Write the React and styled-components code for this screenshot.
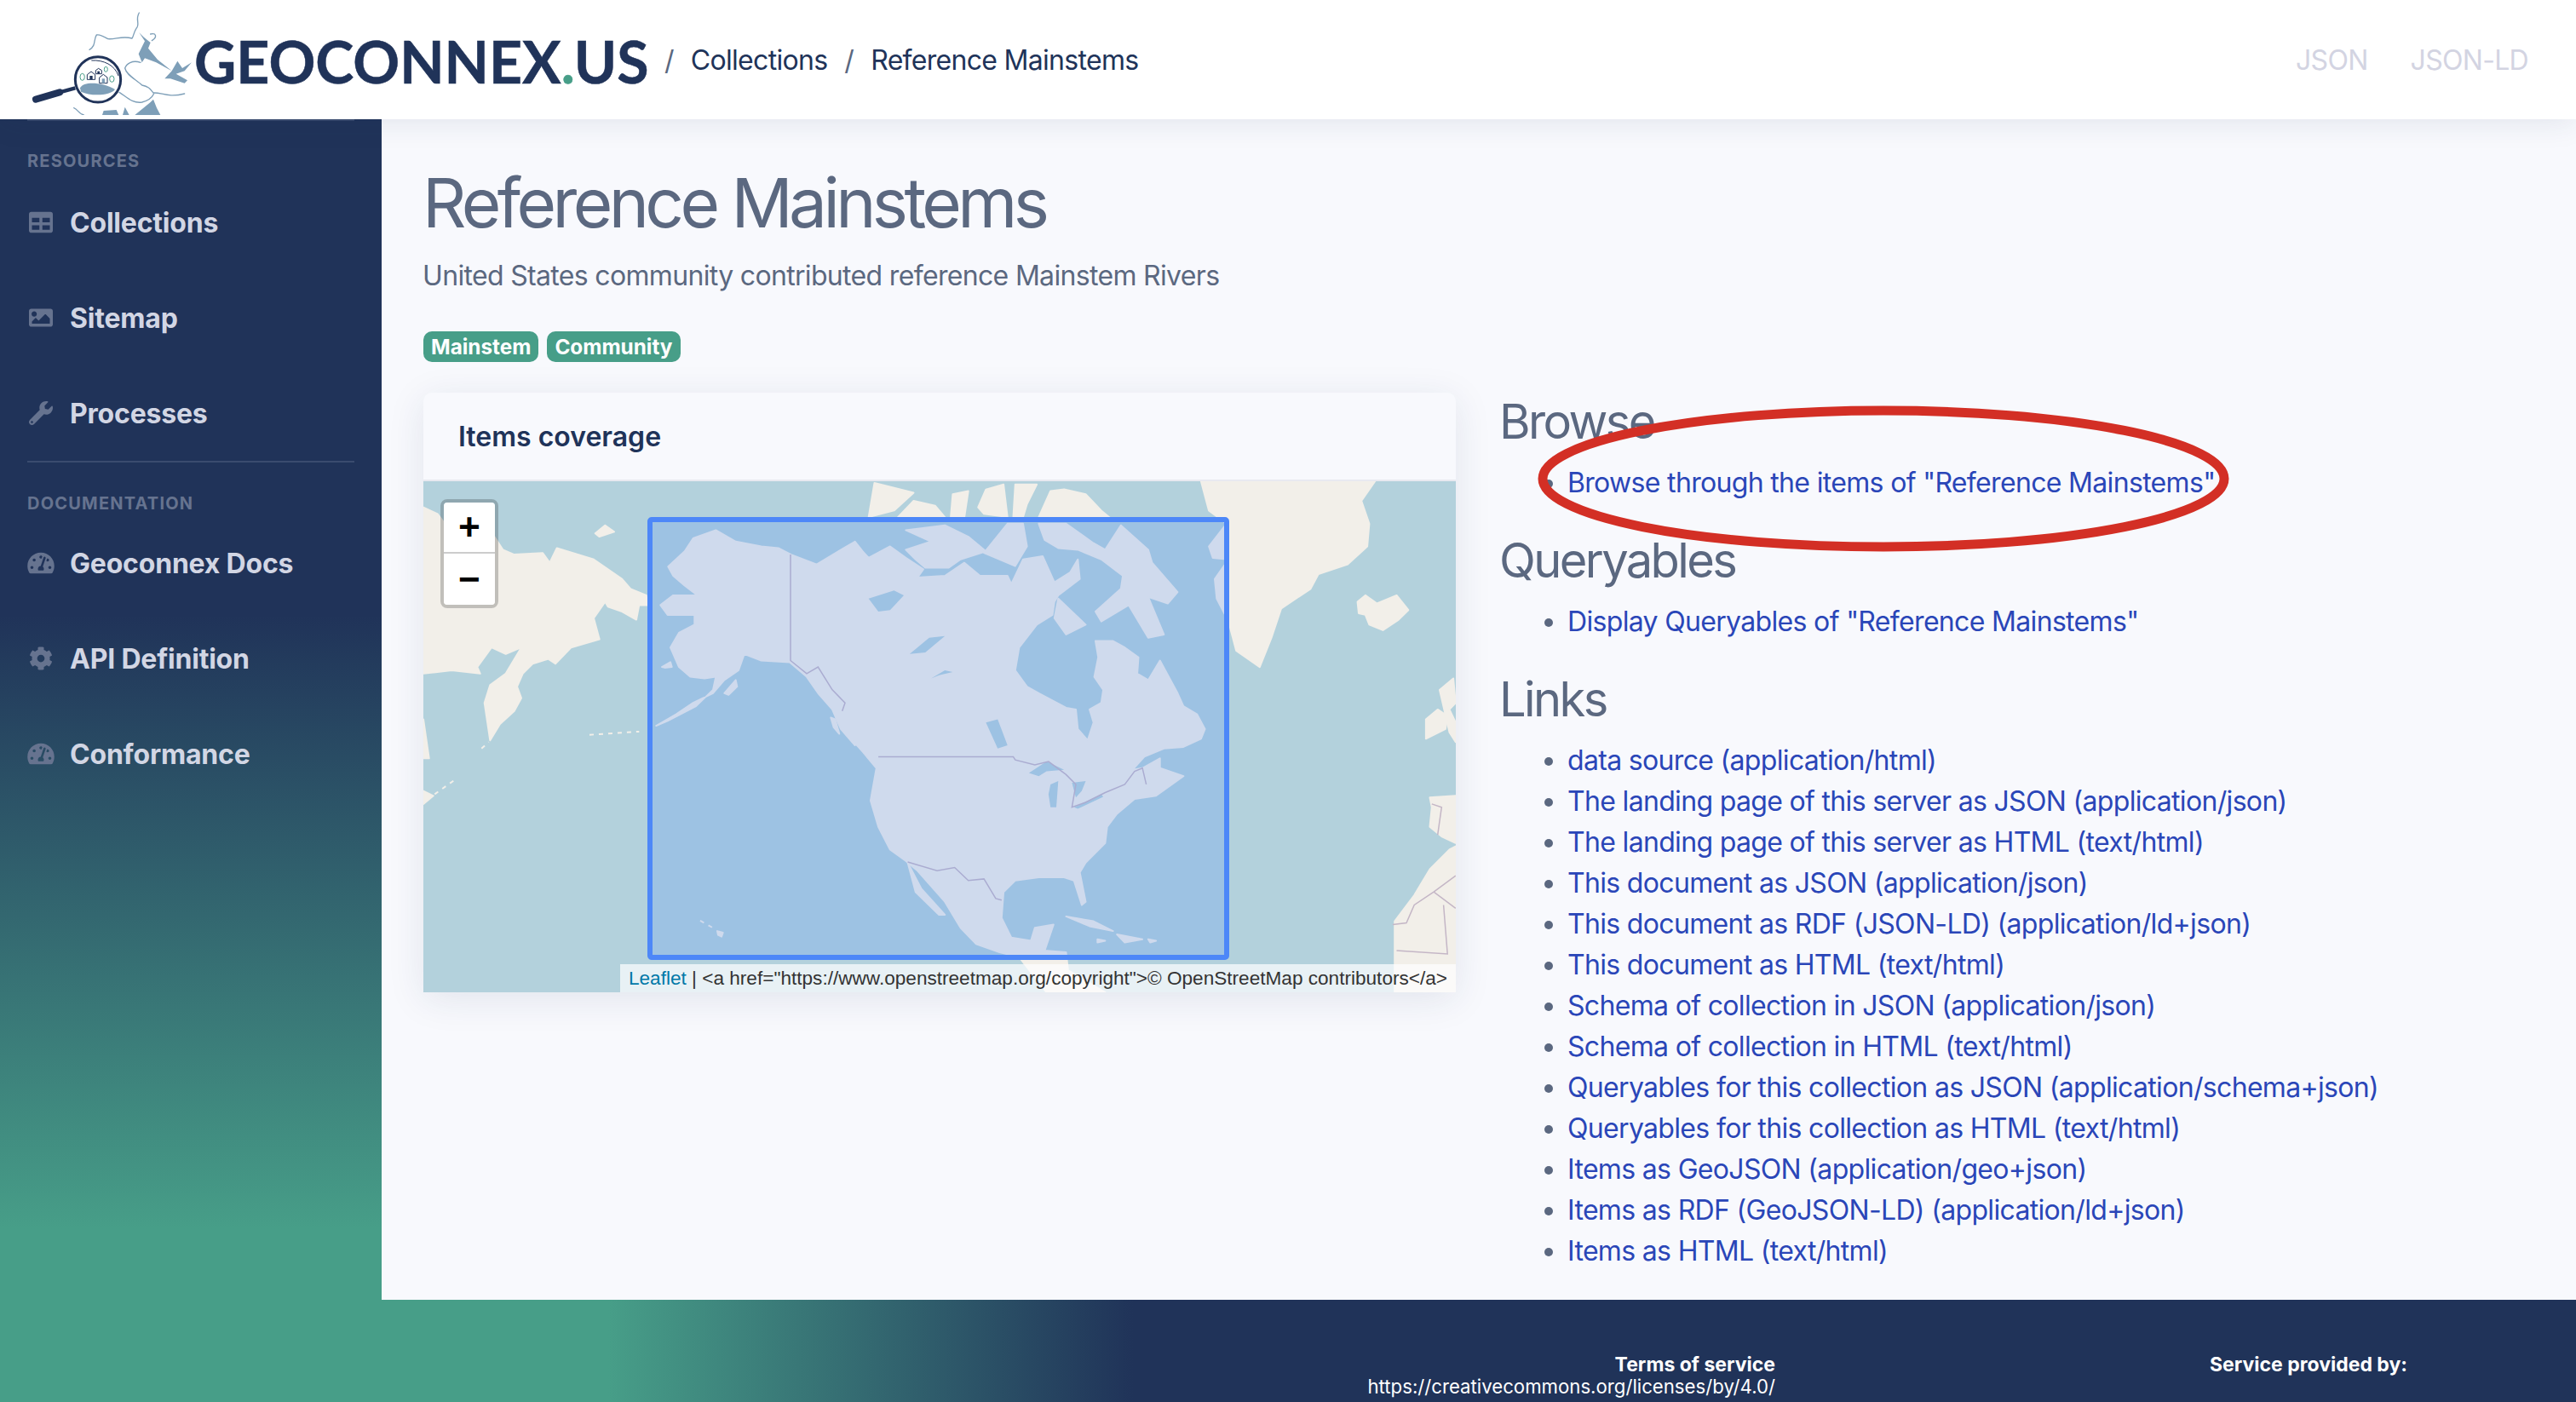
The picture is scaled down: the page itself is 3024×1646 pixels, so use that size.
import React from "react";
import styled, { createGlobalStyle } from "styled-components";
import { FaTable, FaImage, FaWrench, FaTachometerAlt, FaCog } from "react-icons/fa";

const navy = "#203359";
const teal = "#479e88";
const slate = "#5b6880";
const link = "#2a46b8";

const GlobalStyle = createGlobalStyle`
  html, body {
    margin: 0;
    padding: 0;
    background: #f8f9fd;
    font-family: Inter, "Liberation Sans", sans-serif;
  }
`;

const Page = styled.div`
  display: flex;
  flex-direction: column;
  width: 3024px;
  height: 1646px;
  overflow: hidden;
`;

const Header = styled.header`
  display: flex;
  align-items: center;
  height: 140px;
  flex: none;
  padding: 0 56px 0 20px;
  background: #fff;
  position: relative;
  z-index: 2;
  box-shadow: 0 4px 32px rgba(32, 51, 89, 0.1);
`;

const LogoMark = styled.svg`
  flex: none;
`;

const Wordmark = styled.span`
  font-family: Lato, sans-serif;
  font-weight: 700;
  font-size: 68px;
  line-height: 1;
  color: ${navy};
  -webkit-text-stroke: 0.5px ${navy};
  white-space: nowrap;
  width: 532px;
  flex: none;
  padding-top: 3px;
`;

const Dot = styled.span`
  color: ${teal};
  -webkit-text-stroke: 0.5px ${teal};
`;

const Crumbs = styled.nav`
  display: flex;
  align-items: center;
  margin-left: 20px;
  font-size: 32px;
  letter-spacing: -0.7px;
  color: ${navy};
  gap: 20px;
`;

const Slash = styled.span`
  color: ${slate};
`;

const HeaderLinks = styled.div`
  display: flex;
  gap: 50px;
  margin-left: auto;
  font-size: 32px;
  letter-spacing: -0.7px;
  color: #d3d4e2;
`;

const Body = styled.div`
  display: flex;
  flex: 1;
  min-height: 0;
`;

const Sidebar = styled.aside`
  width: 448px;
  flex: none;
  padding: 0 32px;
  box-sizing: border-box;
  background: linear-gradient(180deg, ${navy} 42%, ${teal} 94%);
`;

const SideRule = styled.hr`
  border: 0;
  height: 2px;
  margin: 0;
  background: #3a4c6f;
`;

const SideLabel = styled.div`
  font-size: 20px;
  font-weight: 700;
  letter-spacing: 1.2px;
  line-height: 24px;
  text-transform: uppercase;
  color: #66738f;
  padding: ${(p) => p.$top}px 0 ${(p) => p.$bottom}px;
`;

const SideItem = styled.a`
  display: flex;
  align-items: center;
  height: 112px;
  gap: 18px;
  font-size: 32px;
  font-weight: 700;
  letter-spacing: -0.2px;
  color: #d2d6e4;
  svg {
    width: 32px;
    height: 28px;
    color: #66738f;
    flex: none;
  }
`;

const Main = styled.main`
  flex: 1;
  min-width: 0;
  padding: 50px 0 0 49px;
`;

const Title = styled.h1`
  margin: 0 0 0 -1px;
  font-size: 80px;
  font-weight: 400;
  line-height: 96px;
  letter-spacing: -4.6px;
  color: ${slate};
`;

const Subtitle = styled.p`
  margin: 14px 0 0 -1px;
  font-size: 32px;
  line-height: 48px;
  letter-spacing: -0.67px;
  color: ${slate};
`;

const Badges = styled.div`
  display: flex;
  gap: 10px;
  margin-top: 41px;
`;

const Badge = styled.span`
  display: flex;
  align-items: center;
  height: 36px;
  padding: 0 9px;
  border-radius: 10px;
  background: ${teal};
  color: #fff;
  font-size: 24.3px;
  font-weight: 700;
`;

const Columns = styled.div`
  display: flex;
  margin-top: 36px;
`;

const Card = styled.section`
  width: 1212px;
  height: 704px;
  flex: none;
  display: flex;
  flex-direction: column;
  border-radius: 10px 10px 0 0;
  background: #f8f9fd;
  box-shadow: 0 8px 44px rgba(32, 51, 89, 0.1);
`;

const CardHead = styled.h3`
  margin: 0;
  height: 104px;
  flex: none;
  display: flex;
  align-items: center;
  padding-left: 41px;
  font-size: 32px;
  font-weight: 600;
  box-sizing: border-box;
  color: ${navy};
  border-bottom: 2px solid #e8e9f0;
`;

const MapBox = styled.div`
  position: relative;
  flex: 1;
  overflow: hidden;
  background: #b3d1dc;
  svg {
    display: block;
  }
`;

const ZoomBar = styled.div`
  position: absolute;
  left: 20px;
  top: 21px;
  width: 60px;
  border: 4px solid rgba(0, 0, 0, 0.2);
  border-radius: 8px;
  background-clip: padding-box;
`;

const ZoomButton = styled.a`
  display: flex;
  align-items: center;
  justify-content: center;
  height: 60px;
  padding-top: 6px;
  background: #fff;
  color: #000;
  font: 700 44px "Liberation Mono", monospace;
  border-radius: ${(p) => (p.$last ? "0 0 4px 4px" : "4px 4px 0 0")};
  border-bottom: ${(p) => (p.$last ? "0" : "2px solid #ccc")};
  box-sizing: border-box;
`;

const Attribution = styled.div`
  position: absolute;
  right: 0;
  bottom: 0;
  height: 33px;
  padding: 0 10px;
  display: flex;
  align-items: center;
  white-space: nowrap;
  background: rgba(255, 255, 255, 0.7);
  font: 22.6px "Liberation Sans", sans-serif;
  color: #333;
  a {
    color: #0078a8;
  }
`;

const Aside = styled.div`
  position: relative;
  margin-left: 51px;
  padding-top: 2px;
  flex: 1;
`;

const SectionTitle = styled.h2`
  margin: 0;
  font-size: 56px;
  font-weight: 400;
  line-height: 64px;
  letter-spacing: -2.6px;
  color: ${slate};
`;

const Links = styled.ul`
  margin: 16px 0 35px;
  padding: 0 0 0 80px;
  font-size: 32px;
  line-height: 48px;
  letter-spacing: -0.67px;
  color: ${slate};
  a {
    color: ${link};
  }
`;

const Ring = styled.svg`
  position: absolute;
  left: 45px;
  top: 16px;
  overflow: visible;
`;

const Footer = styled.footer`
  display: flex;
  flex: none;
  height: 120px;
  padding-top: 63px;
  box-sizing: border-box;
  background: linear-gradient(90deg, ${teal} 23.6%, ${navy} 44%);
  color: #fff;
  font-size: 22.2px;
  line-height: 26px;
`;

const FootLeft = styled.div`
  width: 2084px;
  flex: none;
  text-align: right;
`;

const FootRight = styled.div`
  margin-left: 510px;
`;

const FootHead = styled.div`
  font-size: 23px;
  font-weight: 700;
`;

// coordinates were read off two crops of the reference, each with its own scale
const w = (x, y) => `${(x / 3).toFixed(1)},${(y / 2.613).toFixed(1)}`;
const e = (x, y) => `${(502 + x / 2.178).toFixed(1)},${(y / 2.613).toFixed(1)}`;
const W = (list) => list.map(([x, y]) => w(x, y)).join(" ");
const E = (list) => list.map(([x, y]) => e(x, y)).join(" ");

const northAmerica = [
  W([[862,262],[920,215],[950,175],[1030,150],[1100,185],[1190,200],[1250,205],[1295,225],[1385,255],[1480,205],[1520,185]]),
  E([[30,215],[45,235],[100,200],[140,235],[185,270],[170,295],[240,290],[290,250],[330,290],[400,290],[410,315],[440,240],[490,230],[520,310],[560,280],[580,240],[585,300],[530,350],[520,370],[515,410],[475,440],[430,510],[420,580],[450,630],[480,650],[550,695],[575,700],[580,760],[605,795],[620,740],[610,700],[640,680],[645,640],[622,600],[632,540],[625,490],[670,490],[700,510],[735,540],[732,590],[760,610],[790,550],[835,650],[850,690],[885,715],[905,760],[895,790],[850,815],[800,820],[750,845],[720,885],[745,880],[790,850],[790,880],[850,905],[780,965],[725,975],[680,1020],[655,1060],[650,1110],[600,1170],[585,1200],[600,1290],[590,1300],[570,1225],[545,1215],[480,1215],[420,1225],[390,1260],[385,1340],[410,1400],[460,1410],[470,1370],[518,1360],[495,1440],[550,1445],[555,1500],[650,1568],[500,1568],[430,1460],[380,1445],[320,1420],[280,1370],[240,1290],[170,1195],[140,1165],[100,1130],[70,1060],[50,980],[65,880],[30,830],[0,790]]),
  W([[1520,810],[1470,760],[1440,700],[1390,650],[1350,600],[1290,555],[1190,550],[1130,530],[1110,580],[1060,610],[1020,650],[950,680],[890,715],[820,750],[860,735],[960,690],[1020,640],[1030,600],[990,605],[940,600],[900,570],[870,510],[900,465],[955,440],[955,410],[860,410],[835,380],[880,350],[965,350],[920,320],[880,290]]),
].join(" ");

const westLand = [
  [[0,80],[50,100],[100,160],[250,170],[280,210],[320,225],[420,220],[445,250],[470,205],[600,240],[700,300],[730,330],[785,350],[790,380],[760,380],[750,425],[700,400],[650,385],[640,370],[600,420],[620,485],[520,510],[465,560],[440,545],[385,560],[350,590],[330,630],[345,665],[320,705],[270,745],[235,795],[215,680],[235,625],[290,590],[345,510],[290,530],[240,510],[190,570],[200,590],[100,580],[0,590]],
  [[605,160],[640,135],[672,155],[620,170]],
  [[0,730],[20,850],[0,850]],
  [[0,950],[35,965],[0,990]],
  [[840,570],[870,555],[875,570],[850,572]],
  [[1060,650],[1100,610],[1105,630],[1075,655]],
  [[1435,725],[1450,730],[1465,775],[1445,755]],
  [[1035,1380],[1055,1385],[1050,1397],[1038,1392]],
];

const eastLand = [
  [[895,0],[915,90],[960,130],[915,200],[925,235],[965,240],[930,300],[935,360],[965,430],[985,520],[1045,570],[1075,480],[1100,390],[1175,330],[1195,285],[1270,255],[1320,200],[1325,130],[1305,60],[1340,0]],
  [[1295,370],[1315,350],[1345,375],[1395,350],[1425,395],[1400,425],[1360,457],[1325,440],[1315,410],[1298,405]],
  [[1470,730],[1500,700],[1525,720],[1520,760],[1470,790]],
  [[1505,640],[1540,605],[1546,680],[1530,700],[1546,740],[1546,800],[1530,770]],
  [[1480,970],[1546,965],[1546,1110],[1510,1090],[1480,1060],[1485,1000]],
  [[1546,1120],[1530,1130],[1480,1190],[1440,1270],[1390,1350],[1390,1568],[1546,1568]],
  [[140,210],[205,185],[140,150],[240,135],[300,170],[345,215],[280,240],[250,265],[190,265],[165,240]],
  [[340,220],[400,130],[440,130],[450,200],[420,260],[380,240]],
  [[480,130],[550,130],[620,190],[650,210],[690,135],[760,210],[770,250],[835,340],[810,375],[760,355],[800,470],[760,480],[710,380],[640,430],[625,400],[690,330],[695,290],[640,240],[580,210],[530,205],[495,180]],
  [[520,420],[530,360],[600,440],[550,470]],
  [[60,5],[160,35],[110,90],[45,110]],
  [[120,110],[160,60],[215,75],[240,110]],
  [[255,110],[260,40],[300,30],[290,110]],
  [[325,80],[345,25],[390,10],[400,110],[340,100]],
  [[415,110],[420,10],[475,10],[450,70],[440,110]],
  [[480,110],[510,30],[545,25],[600,40],[640,90],[665,115]],
  [[145,1170],[180,1250],[240,1330],[225,1330],[165,1260]],
  [[550,1335],[620,1350],[670,1380],[610,1365]],
  [[680,1390],[745,1405],[700,1415]],
  [[630,1405],[650,1410],[630,1415]],
  [[760,1405],[780,1410],[765,1415]],
];

const lakes = [
  [[45,360],[110,335],[135,350],[100,395],[70,400]],
  [[150,530],[200,480],[240,475],[190,525]],
  [[205,605],[240,580],[260,585],[225,595]],
  [[345,740],[375,730],[400,810],[375,820]],
  [[455,895],[500,860],[545,885],[500,890],[480,905]],
  [[510,930],[530,920],[525,1000],[510,1000],[505,960]],
  [[565,925],[600,920],[590,950],[575,970]],
  [[570,1000],[640,960],[645,968],[580,1005]],
];

const borders = [
  W([[1293,225],[1293,550],[1350,590],[1390,570],[1440,640],[1485,680],[1475,705]]),
  E([[70,845],[415,845],[420,855],[470,870],[505,860],[550,900],[575,930],[565,1000],[600,985],[650,955],[700,930],[725,890],[745,880],[755,930]]),
  E([[145,1168],[220,1195],[265,1185],[300,1225],[340,1220],[370,1280],[385,1285]]),
  E([[1485,990],[1510,1000],[1500,1085]]),
  E([[1546,1210],[1490,1260],[1440,1300],[1420,1355],[1385,1360]]),
  E([[1490,1260],[1546,1310]]),
  E([[1515,1300],[1525,1450],[1395,1440]]),
];

const islandChains = [
  W([[40,960],[120,910]]),
  W([[205,820],[230,800]]),
  W([[585,778],[760,768]]),
  W([[975,1348],[1030,1375]]),
];

const WorldMap = () => (
  <svg width="1212" height="600" viewBox="0 0 1212 600">
    <filter id="tile-soft">
      <feGaussianBlur stdDeviation="0.7" />
    </filter>
    <g filter="url(#tile-soft)">
      <g fill="#f2efe9" stroke="#f2efe9" strokeWidth="2" strokeLinejoin="round">
        <polygon points={northAmerica} />
        {westLand.map((p, i) => <polygon key={i} points={W(p)} />)}
        {eastLand.map((p, i) => <polygon key={i} points={E(p)} />)}
      </g>
      <g fill="#b3d1dc">
        {lakes.map((p, i) => <polygon key={i} points={E(p)} />)}
      </g>
      <g fill="none" stroke="#f2efe9" strokeWidth="2" strokeDasharray="5 6">
        {islandChains.map((p, i) => <polyline key={i} points={p} />)}
      </g>
      <g fill="none" stroke="#c4b6c6" strokeWidth="1.5">
        {borders.map((p, i) => <polyline key={i} points={p} />)}
      </g>
    </g>
    <rect x="266" y="45" width="677" height="514" rx="2" fill="#4488ff" fillOpacity="0.2" stroke="#4d87f8" strokeWidth="6" />
  </svg>
);

const Logo = () => (
  <LogoMark width="208" height="130" viewBox="0 0 624 390">
    <g fill="none" stroke="#7e9fb8" strokeWidth="4" strokeLinecap="round">
      <path d="M430 30 C415 55 435 70 420 85 C410 100 410 115 405 120 C370 110 345 125 320 122 C300 110 290 105 280 108 C268 125 280 145 255 160" />
      <path d="M435 205 C405 195 385 210 380 225 C385 250 420 265 440 285 C465 290 470 300 480 312 C510 310 530 330 590 315" />
      <path d="M360 310 C385 325 405 350 440 345 C460 340 475 330 482 315" />
      <path d="M470 105 C490 100 495 115 475 128" />
      <path d="M200 365 C215 370 215 385 235 390" />
    </g>
    <g fill="#7e9fb8">
      <path d="M430 100 L445 115 L470 135 L462 155 L495 195 L545 235 L565 200 L582 225 L615 205 L590 235 L560 245 L600 268 L590 278 L540 262 L520 262 L545 235 L490 205 L450 190 L440 205 L428 175 L440 150 L450 130 Z" />
      <path d="M300 390 L305 375 L350 372 L358 390 Z M372 390 L380 362 L395 390 Z M415 390 L470 345 L480 335 L492 365 L505 390 Z" />
    </g>
    <path d="M205 295 L150 310" stroke={navy} strokeWidth="13" fill="none" />
    <path d="M150 310 L66 335" stroke={navy} strokeWidth="24" strokeLinecap="round" fill="none" />
    <circle cx="285" cy="265" r="80" fill="#fff" stroke={navy} strokeWidth="9" />
    <path d="M262 198 C305 195 345 215 357 252" stroke={navy} strokeWidth="3" fill="none" />
    <path d="M222 295 C235 270 300 275 345 300 C330 322 260 325 225 308 Z" fill="#7e9fb8" />
    <g fill="#fff" stroke={navy} strokeWidth="3">
      <path d="M247 265 V248 L261 237 L275 248 V265 Z" />
      <path d="M277 245 V233 L287 226 L298 233 V245 Z" />
      <path d="M290 278 V258 L304 247 L318 258 V278 Z" />
    </g>
    <g fill={navy}>
      <rect x="256" y="252" width="10" height="13" />
      <rect x="283" y="236" width="8" height="9" />
    </g>
    <rect x="299" y="262" width="10" height="16" fill="#7e9fb8" />
    <g fill="none" stroke={teal} strokeWidth="3">
      <ellipse cx="230" cy="256" rx="8" ry="12" />
      <ellipse cx="313" cy="229" rx="6" ry="9" />
      <ellipse cx="334" cy="263" rx="8" ry="11" />
    </g>
  </LogoMark>
);

const resourceItems = [
  { icon: <FaTable />, label: "Collections" },
  { icon: <FaImage />, label: "Sitemap" },
  { icon: <FaWrench />, label: "Processes" },
];

const docItems = [
  { icon: <FaTachometerAlt />, label: "Geoconnex Docs" },
  { icon: <FaCog />, label: "API Definition" },
  { icon: <FaTachometerAlt />, label: "Conformance" },
];

const itemLinks = [
  "data source (application/html)",
  "The landing page of this server as JSON (application/json)",
  "The landing page of this server as HTML (text/html)",
  "This document as JSON (application/json)",
  "This document as RDF (JSON-LD) (application/ld+json)",
  "This document as HTML (text/html)",
  "Schema of collection in JSON (application/json)",
  "Schema of collection in HTML (text/html)",
  "Queryables for this collection as JSON (application/schema+json)",
  "Queryables for this collection as HTML (text/html)",
  "Items as GeoJSON (application/geo+json)",
  "Items as RDF (GeoJSON-LD) (application/ld+json)",
  "Items as HTML (text/html)",
];

function App() {
  return (
    <Page>
      <GlobalStyle />
      <Header>
        <Logo />
        <Wordmark>
          GEOCONNEX<Dot>.</Dot>US
        </Wordmark>
        <Crumbs>
          <Slash>/</Slash>
          <span>Collections</span>
          <Slash>/</Slash>
          <span>Reference Mainstems</span>
        </Crumbs>
        <HeaderLinks>
          <span>JSON</span>
          <span>JSON-LD</span>
        </HeaderLinks>
      </Header>
      <Body>
        <Sidebar>
          <SideRule />
          <SideLabel $top={35} $bottom={4}>Resources</SideLabel>
          {resourceItems.map((item) => (
            <SideItem key={item.label}>
              {item.icon}
              {item.label}
            </SideItem>
          ))}
          <SideRule />
          <SideLabel $top={36} $bottom={2}>Documentation</SideLabel>
          {docItems.map((item) => (
            <SideItem key={item.label}>
              {item.icon}
              {item.label}
            </SideItem>
          ))}
        </Sidebar>
        <Main>
          <Title>Reference Mainstems</Title>
          <Subtitle>United States community contributed reference Mainstem Rivers</Subtitle>
          <Badges>
            <Badge>Mainstem</Badge>
            <Badge>Community</Badge>
          </Badges>
          <Columns>
            <Card>
              <CardHead>Items coverage</CardHead>
              <MapBox>
                <WorldMap />
                <ZoomBar>
                  <ZoomButton>+</ZoomButton>
                  <ZoomButton $last>−</ZoomButton>
                </ZoomBar>
                <Attribution>
                  <a>Leaflet</a>&nbsp;|&nbsp;&lt;a href="https://www.openstreetmap.org/copyright"&gt;© OpenStreetMap contributors&lt;/a&gt;
                </Attribution>
              </MapBox>
            </Card>
            <Aside>
              <SectionTitle>Browse</SectionTitle>
              <Links>
                <li><a>Browse through the items of "Reference Mainstems"</a></li>
              </Links>
              <SectionTitle>Queryables</SectionTitle>
              <Links>
                <li><a>Display Queryables of "Reference Mainstems"</a></li>
              </Links>
              <SectionTitle>Links</SectionTitle>
              <Links>
                {itemLinks.map((text) => (
                  <li key={text}><a>{text}</a></li>
                ))}
              </Links>
              <Ring width="813" height="170" viewBox="0 0 813 170" fill="none">
                <ellipse cx="406" cy="85" rx="400" ry="80" stroke="#d32f25" strokeWidth="11" />
              </Ring>
            </Aside>
          </Columns>
        </Main>
      </Body>
      <Footer>
        <FootLeft>
          <FootHead>Terms of service</FootHead>
          <div>https://creativecommons.org/licenses/by/4.0/</div>
        </FootLeft>
        <FootRight>
          <FootHead>Service provided by:</FootHead>
        </FootRight>
      </Footer>
    </Page>
  );
}

export default App;
